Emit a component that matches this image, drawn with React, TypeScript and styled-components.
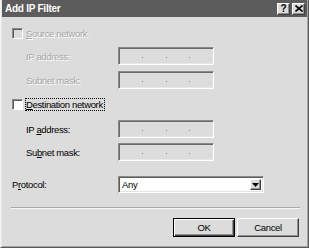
import React from 'react';
import styled, { createGlobalStyle } from 'styled-components';

const GlobalStyle = createGlobalStyle`
  html, body {
    margin: 0;
    padding: 0;
    background: #dcdcdc;
  }
  body {
    font-family: "Liberation Sans", Arial, sans-serif;
  }
`;

const Window = styled.div`
  width: 309px;
  height: 248px;
  box-sizing: border-box;
  background: #dcdcdc;
  border-left: 1px solid #f4f4f4;
  border-right: 1px solid #5a5a5a;
  border-bottom: 1px solid #5a5a5a;
  box-shadow: inset 1px 0 #e8e8e8, inset -1px -1px #a4a4a4;
  padding: 0 1px 1px 1px;
  display: flex;
  flex-direction: column;
  font-size: 9.5px;
  letter-spacing: -0.35px;
  color: #000;
`;

const TitleBar = styled.div`
  height: 17px;
  background: #5c5c5c;
  display: flex;
  align-items: center;
  padding: 0 2px 0 2px;
`;

const Title = styled.div`
  flex: 1;
  color: #fff;
  font-weight: bold;
  font-size: 10px;
  letter-spacing: -0.25px;
  padding-left: 1px;
`;

const CaptionButton = styled.div`
  width: 13px;
  height: 12px;
  box-sizing: border-box;
  background: #dcdcdc;
  border: 1px solid;
  border-color: #fff #404040 #404040 #fff;
  box-shadow: inset -1px -1px #909090;
  display: flex;
  align-items: center;
  justify-content: center;
  font-weight: bold;
  font-size: 10px;
  letter-spacing: 0;
  line-height: 1;
  margin-left: 2px;
`;

const Body = styled.div`
  flex: 1;
  display: flex;
  flex-direction: column;
  padding: 0 8px 0 10px;
`;

const CheckRow = styled.div<{ $mt: number }>`
  display: flex;
  align-items: center;
  height: 12px;
  margin-top: ${p => p.$mt}px;
`;

const CheckBox = styled.div<{ $disabled?: boolean }>`
  width: 11px;
  height: 11px;
  box-sizing: border-box;
  background: ${p => (p.$disabled ? '#dcdcdc' : '#fff')};
  border: 1px solid;
  border-color: #8a8a8a #fff #fff #8a8a8a;
  box-shadow: inset 1px 1px #5c5c5c;
  margin-right: 2px;
`;

const Label = styled.span<{ $disabled?: boolean; $focus?: boolean }>`
  color: ${p => (p.$disabled ? '#a6a6a6' : '#000')};
  text-shadow: ${p => (p.$disabled ? '1px 1px #fff' : 'none')};
  border: 1px dotted ${p => (p.$focus ? '#000' : 'transparent')};
  padding: 0 1px 0 0;
  line-height: 11px;
  white-space: nowrap;
`;

const FieldRow = styled.div<{ $mt: number; $height: number }>`
  display: grid;
  grid-template-columns: 106px auto;
  align-items: center;
  height: ${p => p.$height}px;
  margin-top: ${p => p.$mt}px;
`;

const FieldLabel = styled.span<{ $indent: number; $disabled?: boolean }>`
  padding-left: ${p => p.$indent}px;
  color: ${p => (p.$disabled ? '#a6a6a6' : '#000')};
  text-shadow: ${p => (p.$disabled ? '1px 1px #fff' : 'none')};
  white-space: nowrap;
`;

const AddressBox = styled.div`
  width: 96px;
  height: 18px;
  box-sizing: border-box;
  background: #dcdcdc;
  border: 1px solid;
  border-color: #8a8a8a #fff #fff #8a8a8a;
  box-shadow: inset 1px 1px #6a6a6a, inset -1px -1px #e4e4e4;
  display: flex;
  align-items: center;
  justify-content: space-evenly;
  padding: 2px 0 0 0;
`;

const Dot = styled.span`
  width: 1px;
  height: 1px;
  background: #8c8c8c;
`;

const Select = styled.div`
  width: 146px;
  height: 17px;
  box-sizing: border-box;
  background: #fff;
  border: 1px solid;
  border-color: #8a8a8a #fff #fff #8a8a8a;
  box-shadow: inset 1px 1px #5c5c5c, inset -1px -1px #e4e4e4;
  display: flex;
  align-items: stretch;
  padding: 2px 2px 2px 2px;
`;

const SelectValue = styled.span`
  flex: 1;
  padding-left: 1px;
  line-height: 11px;
`;

const ArrowButton = styled.div`
  width: 11px;
  box-sizing: border-box;
  background: #dcdcdc;
  border: 1px solid;
  border-color: #fff #404040 #404040 #fff;
  box-shadow: inset -1px -1px #909090;
  display: flex;
  align-items: center;
  justify-content: center;
`;

const Separator = styled.div<{ $mt: number }>`
  height: 1px;
  margin-top: ${p => p.$mt}px;
  margin-left: -1px;
  margin-right: -1px;
  background: #a8a8a8;
  border-bottom: 1px solid #f8f8f8;
`;

const ButtonRow = styled.div<{ $mt: number }>`
  display: flex;
  justify-content: flex-end;
  gap: 2px;
  margin-top: ${p => p.$mt}px;
`;

const PushButton = styled.div<{ $default?: boolean }>`
  width: 62px;
  height: 19px;
  box-sizing: border-box;
  background: #dcdcdc;
  border: 1px solid;
  border-color: ${p => (p.$default ? '#000' : '#fff #404040 #404040 #fff')};
  box-shadow: ${p =>
    p.$default
      ? 'inset 1px 1px #fff, inset -1px -1px #404040, inset -2px -2px #909090'
      : 'inset -1px -1px #909090'};
  display: flex;
  align-items: center;
  justify-content: center;
`;

const U = styled.span`
  text-decoration: underline;
`;

const AddressField: React.FC = () => (
  <AddressBox>
    <Dot />
    <Dot />
    <Dot />
  </AddressBox>
);

export default function App() {
  return (
    <>
      <GlobalStyle />
      <Window>
        <TitleBar>
          <Title>Add IP Filter</Title>
          <CaptionButton>?</CaptionButton>
          <CaptionButton>
            <svg width="8" height="7" viewBox="0 0 8 7">
              <path d="M0.5 0.5 L7.5 6.5 M7.5 0.5 L0.5 6.5" stroke="#000" strokeWidth="1.6" />
            </svg>
          </CaptionButton>
        </TitleBar>
        <Body>
          <CheckRow $mt={10}>
            <CheckBox $disabled />
            <Label $disabled>
              <U>S</U>ource network
            </Label>
          </CheckRow>
          <FieldRow $mt={8} $height={18}>
            <FieldLabel $indent={14} $disabled>IP address:</FieldLabel>
            <AddressField />
          </FieldRow>
          <FieldRow $mt={6} $height={18}>
            <FieldLabel $indent={14} $disabled>Subnet mask:</FieldLabel>
            <AddressField />
          </FieldRow>

          <CheckRow $mt={9}>
            <CheckBox />
            <Label $focus>
              <U>D</U>estination network
            </Label>
          </CheckRow>
          <FieldRow $mt={10} $height={18}>
            <FieldLabel $indent={14}>
              IP <U>a</U>ddress:
            </FieldLabel>
            <AddressField />
          </FieldRow>
          <FieldRow $mt={5} $height={18}>
            <FieldLabel $indent={14}>
              Su<U>b</U>net mask:
            </FieldLabel>
            <AddressField />
          </FieldRow>

          <FieldRow $mt={15} $height={17}>
            <FieldLabel $indent={0}>
              P<U>r</U>otocol:
            </FieldLabel>
            <Select>
              <SelectValue>Any</SelectValue>
              <ArrowButton>
                <svg width="7" height="4" viewBox="0 0 7 4">
                  <path d="M0 0 H7 L3.5 4 Z" fill="#000" />
                </svg>
              </ArrowButton>
            </Select>
          </FieldRow>

          <Separator $mt={14} />
          <ButtonRow $mt={9}>
            <PushButton $default>OK</PushButton>
            <PushButton>Cancel</PushButton>
          </ButtonRow>
        </Body>
      </Window>
    </>
  );
}
